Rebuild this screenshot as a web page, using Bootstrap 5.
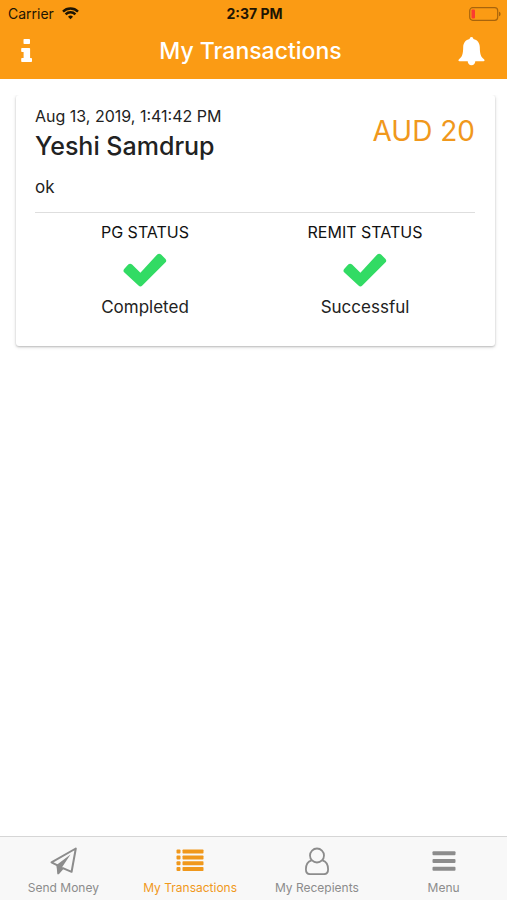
<!DOCTYPE html>
<html lang="en">
<head>
<meta charset="utf-8">
<meta name="viewport" content="width=device-width, initial-scale=1">
<title>My Transactions</title>
<link href="https://cdn.jsdelivr.net/npm/bootstrap@5.3.0/dist/css/bootstrap.min.css" rel="stylesheet">
<style>
  :root { --brand: #fb9b14; --brand-ink: #f0981c; --ok: #32db64; --muted-ink: #8c8c8c; }
  body { font-family: Inter, "Liberation Sans", sans-serif; color: #222; }
  svg { display: block; }
  .top-area { background: var(--brand); }
  .status-bar { height: 27px; font-size: 14px; line-height: 27px; color: #1d1503; padding: 0 6px 0 8px; }
  .title-bar { height: 52px; padding: 0 22px 4px 16px; }
  .title-bar h1 { font-size: 23px; line-height: 28px; font-weight: 500; }
  .txn-card { border-radius: 3px; box-shadow: 0 1px 2px rgba(0,0,0,.2), 0 1px 4px rgba(0,0,0,.12); clip-path: inset(0 -8px -8px -8px); padding: 9px 20px 27px 19px; }
  .txn-date { font-size: 16px; line-height: 24px; }
  .txn-name { font-size: 25px; line-height: 36px; font-weight: 500; }
  .txn-note { font-size: 17px; line-height: 24px; margin-top: 11px; }
  .txn-amount { font-size: 28px; line-height: 36px; color: var(--brand-ink); padding-top: 9px; }
  .txn-head { padding-bottom: 13px; border-bottom: 1px solid #dedede; }
  .state { font-size: 17px; line-height: 24px; padding-top: 7px; }
  .state h3 { font-size: 16px; line-height: 24px; color: #111; }
  .state svg { margin: 9px auto 8px; fill: var(--ok); }
  .tab-strip { background: #f8f8f8; border-top: 1px solid #d6d6d6; height: 64px; }
  .tab-strip a { color: var(--muted-ink); font-size: 12px; line-height: 18px; padding-top: 10px; }
  .tab-strip a.active { color: var(--brand-ink); }
  .tab-strip svg { margin: 0 auto 4px; }
</style>
<script src="https://cdn.jsdelivr.net/npm/bootstrap@5.3.0/dist/js/bootstrap.bundle.min.js"></script>
</head>
<body class="bg-white">
<div class="d-flex flex-column min-vh-100">
  <header class="top-area">
    <div class="status-bar row g-0">
      <div class="col d-flex align-items-center">
        <span>Carrier</span>
        <svg class="ms-2" width="17" height="13" viewBox="0 0 17 13" fill="none" stroke="#1d1503" stroke-width="2.4" aria-hidden="true"><path d="M1 4.600a10.600 10.600 0 0 1 15 0M3.600 7.300a6.900 6.900 0 0 1 9.800 0"/><path d="M8.500 12.300 6 9.700a3.600 3.600 0 0 1 5 0z" fill="#1d1503" stroke="none"/></svg>
      </div>
      <div class="col-auto fw-bold">2:37 PM</div>
      <div class="col d-flex align-items-center justify-content-end">
        <svg width="32" height="14" viewBox="0 0 32 14" aria-label="Battery low" role="img"><rect x=".7" y=".7" width="28" height="12.600" rx="3" fill="none" stroke="#a8640c" stroke-width="1.200"/><rect x="2.500" y="2.500" width="3.500" height="9" rx="1" fill="#fb3b30"/><path d="M30 4.700v4.600c1-.3 1.600-1.200 1.600-2.300S31 5 30 4.700z" fill="#a8640c"/></svg>
      </div>
    </div>
    <div class="title-bar row g-0 align-items-center">
      <div class="col d-flex">
        <button type="button" class="btn p-0 border-0" aria-label="Information">
          <svg width="22" height="24" viewBox="0 0 22 24" fill="#fff"><rect x="7.500" y="0" width="6.500" height="5" rx=".8"/><path d="M6 9h7.300q.8 0 .8.800v9.200h1q.9 0 .9.800v2.400q0 .8-.8.800H6q-.8 0-.8-.8v-2.400q0-.8.8-.8h1.600v-6H6q-.8 0-.8-.8V9.800q0-.8.800-.8z"/></svg>
        </button>
      </div>
      <h1 class="col-auto m-0 text-white">My Transactions</h1>
      <div class="col d-flex justify-content-end">
        <button type="button" class="btn p-0 border-0" aria-label="Notifications">
          <svg width="27" height="29" viewBox="0 0 27 29" fill="#fff"><path d="M13.500 0c1.100 0 1.800.8 1.900 1.900 4 .8 6.300 3.900 6.400 8.100.1 7 .9 9.800 4.200 12.200.9.800.7 2-.5 2h-24c-1.200 0-1.400-1.200-.5-2C4.300 19.800 5.100 17 5.200 10c.1-4.200 2.400-7.300 6.400-8.100C11.700.8 12.400 0 13.500 0z"/><path d="M9.700 24h7.600c0 2.600-1.500 4.300-3.800 4.300S9.700 26.600 9.700 24z"/></svg>
        </button>
      </div>
    </div>
  </header>

  <main class="flex-grow-1 ps-3 pe-2 pt-3">
    <article class="txn-card card border-0 me-1">
      <div class="txn-head d-flex justify-content-between">
        <div>
          <time class="txn-date d-block" datetime="2019-08-13T13:41:42">Aug 13, 2019, 1:41:42 PM</time>
          <h2 class="txn-name m-0">Yeshi Samdrup</h2>
          <p class="txn-note mb-0">ok</p>
        </div>
        <div class="txn-amount">AUD 20</div>
      </div>
      <div class="row g-0 text-center">
        <section class="col-6 state">
          <h3 class="m-0 fw-normal">PG STATUS</h3>
          <svg width="44" height="34" viewBox="0 0 44 34" aria-hidden="true"><path d="M1.400 15.700 5.200 11.600q1.900-1.900 3.900 0L17.400 19.800 34.200 1.600q1.900-1.900 3.900 0L42.300 5.700q1.900 1.900 0 3.900L19.300 32.500q-1.900 1.800-3.800 0L1.400 19.600q-1.900-1.900 0-3.900z"/></svg>
          <div>Completed</div>
        </section>
        <section class="col-6 state">
          <h3 class="m-0 fw-normal">REMIT STATUS</h3>
          <svg width="44" height="34" viewBox="0 0 44 34" aria-hidden="true"><path d="M1.400 15.700 5.200 11.600q1.900-1.900 3.900 0L17.400 19.800 34.200 1.600q1.900-1.900 3.900 0L42.300 5.700q1.900 1.900 0 3.900L19.300 32.500q-1.900 1.800-3.800 0L1.400 19.600q-1.900-1.900 0-3.900z"/></svg>
          <div>Successful</div>
        </section>
      </div>
    </article>
  </main>

  <nav class="tab-strip row g-0 text-center sticky-bottom" aria-label="Main">
    <a class="col-3 text-decoration-none" href="#send">
      <svg width="28" height="28" viewBox="0 0 28 28" aria-hidden="true"><path d="M26.800 1.500 2.500 15.300l6 3 .8 8 4.600-5.200 8.700 3.700z" fill="none" stroke="currentColor" stroke-width="2" stroke-linejoin="round"/><path d="M21.500 7.500 7.500 18l1.400 9.300 5-6.200-1-.7z" fill="currentColor"/></svg>
      Send Money
    </a>
    <a class="col-3 text-decoration-none active" href="#transactions" aria-current="page">
      <svg width="28" height="28" viewBox="0 0 28 28" fill="currentColor" aria-hidden="true"><rect x=".5" y="2.500" width="4" height="4" rx="1"/><rect x="6.500" y="2.500" width="21" height="4" rx=".8"/><rect x=".5" y="8.500" width="4" height="4" rx="1"/><rect x="6.500" y="8.500" width="21" height="4" rx=".8"/><rect x=".5" y="14.200" width="4" height="4" rx="1"/><rect x="6.500" y="14.200" width="21" height="4" rx=".8"/><rect x=".5" y="20" width="4" height="4" rx="1"/><rect x="6.500" y="20" width="21" height="4" rx=".8"/></svg>
      My Transactions
    </a>
    <a class="col-3 text-decoration-none" href="#recipients">
      <svg width="28" height="28" viewBox="0 0 28 28" fill="none" stroke="currentColor" stroke-width="1.800" aria-hidden="true"><circle cx="14" cy="8.500" r="7"/><path d="M8.600 13.300C4.500 14.500 2.900 18 2.900 22.200c0 3 1.600 5 4.400 5h13.400c2.800 0 4.400-2 4.400-5 0-4.200-1.600-7.700-5.700-8.900"/></svg>
      My Recepients
    </a>
    <a class="col-3 text-decoration-none" href="#menu">
      <svg width="28" height="28" viewBox="0 0 28 28" fill="currentColor" aria-hidden="true"><rect x="2.500" y="4.300" width="23" height="4" rx="1"/><rect x="2.500" y="12" width="23" height="4" rx="1"/><rect x="2.500" y="19.800" width="23" height="4" rx="1"/></svg>
      Menu
    </a>
  </nav>
</div>
</body>
</html>
